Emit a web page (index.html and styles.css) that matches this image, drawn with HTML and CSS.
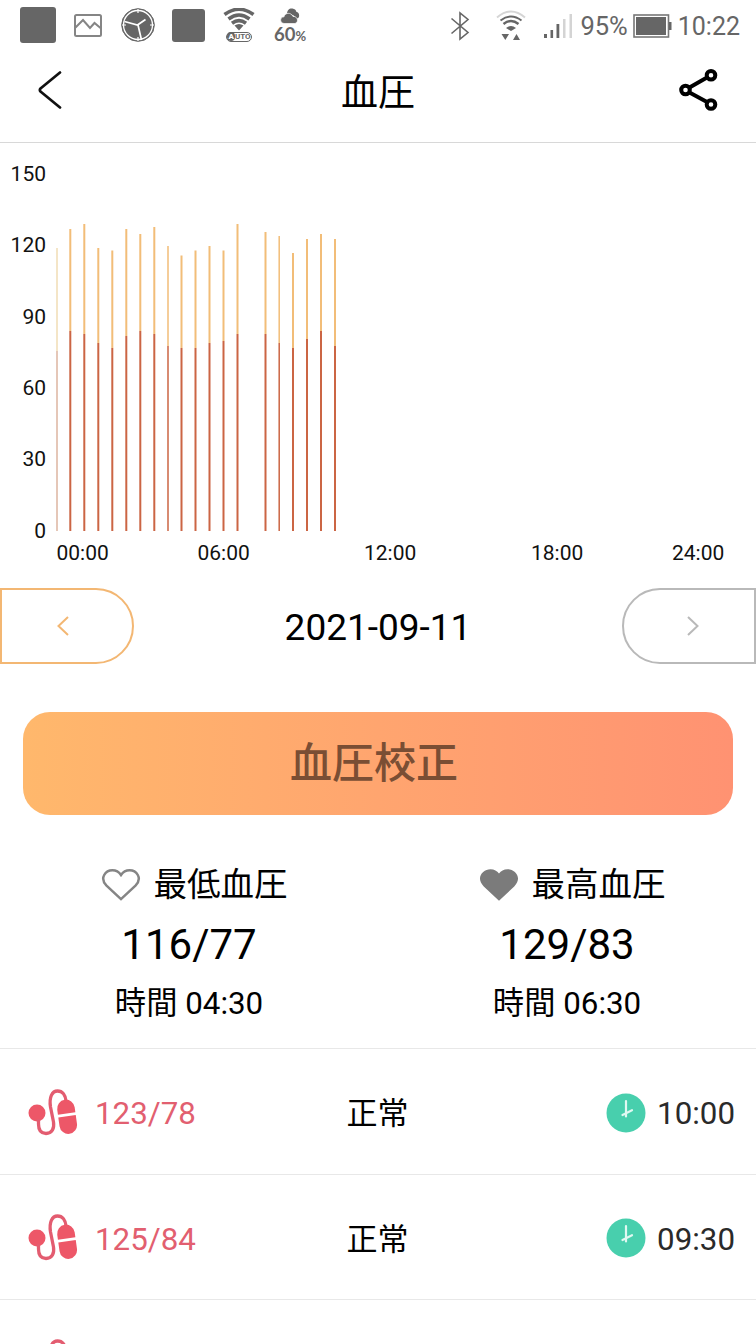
FILE: index.html
```html
<!DOCTYPE html>
<html lang="ja">
<head>
  <meta charset="UTF-8">
  <meta name="viewport" content="width=device-width, initial-scale=1.0">
  <title>血圧</title>
  <link rel="stylesheet" href="styles.css">
</head>
<body>
  <svg class="symbols" width="0" height="0">
    <symbol id="icon-meter" viewBox="0 0 50 50">
      <circle cx="9" cy="25" r="8.500" fill="#ed5768"/>
      <path d="M10.500 31v5c0 6 2.500 9.500 7.500 9.500 6 0 8.500-5 7.500-11.500l-3-15C21 9.500 24 3 29.500 3c5 0 8 4 8.500 10" fill="none" stroke="#e35c70" stroke-width="3.300"/>
      <g transform="rotate(-8 39 28)" fill="#ed5768">
        <path d="M30.200 25.500v-5a8.800 9 0 0 1 17.600 0v5z"/>
        <path d="M30.200 28.200h17.600V37a8.800 9 0 0 1-17.600 0z"/>
      </g>
    </symbol>
    <symbol id="icon-clock" viewBox="0 0 40 40">
      <circle cx="20" cy="20" r="19.500" fill="#48cfad"/>
      <path d="M20 8v15.500M16.500 22l9.500-4.800" fill="none" stroke="#e0f8f1" stroke-width="2.200" stroke-linecap="round"/>
    </symbol>
  </svg>

  <div class="status-bar">
    <div class="status-left">
      <span class="block block-large"></span>
      <svg class="icon-picture" width="28" height="23" viewBox="0 0 28 23" fill="none" stroke="#858585" stroke-width="2">
        <rect x="1" y="1" width="26" height="21" rx="1.500"/>
        <path d="M1.500 13.500L9 6l7 8 4.500-5 6 5"/>
      </svg>
      <svg class="icon-watch" width="36" height="36" viewBox="0 0 36 36">
        <circle cx="18" cy="18" r="16.300" fill="#666" stroke="#666"/>
        <circle cx="18" cy="18" r="14.500" fill="none" stroke="#fff" stroke-width="1.300"/>
        <path d="M18 2v4M18 30v4M2 18h4M30 18h4" stroke="#fff" stroke-width="1.200"/>
        <path d="M4.500 14.500l13 3.500 8-5.500M18 18l3.500 15" fill="none" stroke="#fff" stroke-width="1.700"/>
      </svg>
      <span class="block block-small"></span>
      <div class="wifi-auto">
        <svg width="32" height="23" viewBox="0 0 32 23" fill="none" stroke="#666" stroke-width="3.600">
          <path d="M1.500 6.500Q16-4 30.500 6.500"/>
          <path d="M5.500 11Q16 3 26.500 11"/>
          <path d="M9 15.300Q16 10 23 15.300"/>
          <path d="M11.500 17.500Q16 14.500 20.500 17.500L16 22.500z" fill="#666" stroke="none"/>
        </svg>
        <span class="auto-label"><b>A</b>UTO</span>
      </div>
      <div class="weather">
        <svg width="20" height="16" viewBox="0 0 20 16">
          <path d="M7 6C7 2 9.500 0 12.500.500c2 .3 3.500 1.500 3.800 3.200C20 4.500 20 10 17 10.500L13 7z" fill="#666"/>
          <path d="M4 15.500C-.5 15-.5 9 4 8.800 5 4.500 11 4 13 8.500c5-.5 6 6 2 7z" fill="#666" stroke="#fff" stroke-width=".7"/>
        </svg>
        <span class="humidity">60<small>%</small></span>
      </div>
    </div>
    <div class="status-right">
      <svg class="icon-bluetooth" width="20" height="30" viewBox="0 0 20 30" fill="none" stroke="#666" stroke-width="1.600">
        <path d="M1.500 7.500L18 21.500l-8 6.500V2l8 6.500L1.500 22.500"/>
      </svg>
      <svg class="icon-wifi" width="30" height="32" viewBox="0 0 30 32" fill="none" stroke="#666" stroke-width="2">
        <path d="M1 7.500Q15-4.500 29 7.500" stroke="#d5d5d5"/>
        <path d="M4.500 10.500Q15 2.500 25.500 10.500"/>
        <path d="M7.500 14Q15 8 22.500 14" stroke-width="2.400"/>
        <path d="M10 18Q15 14 20 18l-5 3z" fill="#666" stroke="none"/>
        <path d="M5.500 24h7.500l-3.700 6zM17 30h7l-3.500-6z" fill="#666" stroke="none"/>
      </svg>
      <svg class="icon-signal" width="30" height="26" viewBox="0 0 30 26">
        <path d="M1 21h3v4H1zM7.500 17h2.600v8H7.500zM13.500 11h2.800v14h-2.800z" fill="#666"/>
        <path d="M20 6h2.500v19H20zM26.500 1H29v24h-2.500z" fill="#d4d4d4"/>
      </svg>
      <span class="battery-level">95%</span>
      <svg class="icon-battery" width="39" height="24" viewBox="0 0 39 24">
        <rect x="1" y="1" width="34.500" height="22" fill="none" stroke="#777" stroke-width="1.600"/>
        <rect x="3" y="3" width="30" height="18" fill="#666"/>
        <rect x="36" y="8" width="2.500" height="8" fill="#666"/>
      </svg>
      <span class="time">10:22</span>
    </div>
  </div>

  <header class="header">
    <svg class="icon-back" width="24" height="38" viewBox="0 0 24 38" fill="none" stroke="#111" stroke-width="2.700" stroke-linecap="round" stroke-linejoin="round">
      <path d="M22 1.500L2.500 17.500Q1.200 19 2.500 20.500L22 36.500"/>
    </svg>
    <h1>血圧</h1>
    <svg class="icon-share" width="40" height="42" viewBox="0 0 40 42" fill="none" stroke="#000" stroke-width="4">
      <circle cx="6.500" cy="21" r="4.300"/>
      <circle cx="32" cy="6.300" r="4.300"/>
      <circle cx="32" cy="35.500" r="4.300"/>
      <path d="M10.500 18.500L28 8.500M10.500 23.500L28 33"/>
    </svg>
  </header>

  <section class="chart">
    <svg width="756" height="445" viewBox="0 143 756 445">
      <g class="axis axis-y">
        <text x="46" y="181">150</text>
        <text x="46" y="252">120</text>
        <text x="46" y="323.500">90</text>
        <text x="46" y="395">60</text>
        <text x="46" y="466">30</text>
        <text x="46" y="537.500">0</text>
      </g>
      <g class="axis">
        <text x="56.500" y="559.500">00:00</text>
        <text x="197.500" y="559.500">06:00</text>
        <text x="364" y="559.500">12:00</text>
        <text x="531" y="559.500">18:00</text>
        <text x="672" y="559.500">24:00</text>
      </g>
      <path class="high faint" d="M57 248V351"/>
      <path class="high" d="M70.300 229V331M84.300 224V334M98.300 248V343M112.300 250.500V348M126.300 229V336M140.300 234V331M154.300 227V334M181.500 255.500V348M195.500 250.500V348M209.500 246V343M223.500 250.500V341M237.500 224V334M265.500 232V334M293 253V348M307 239V339M321 234V331M335 239V346"/>
      <path class="high thin" d="M168 246V346M279.200 236V343"/>
      <path class="low faint" d="M57 351V531"/>
      <path class="low" d="M70.300 331V531M84.300 334V531M98.300 343V531M112.300 348V531M126.300 336V531M140.300 331V531M154.300 334V531M181.500 348V531M195.500 348V531M209.500 343V531M223.500 341V531M237.500 334V531M265.500 334V531M293 348V531M307 339V531M321 331V531M335 346V531"/>
      <path class="low thin" d="M168 346V531M279.200 343V531"/>
    </svg>
  </section>

  <nav class="date-nav">
    <button class="prev-btn">
      <svg width="12" height="20" viewBox="0 0 12 20" fill="none" stroke="currentColor" stroke-width="2"><path d="M11 1L1.500 10l9.500 9"/></svg>
    </button>
    <span class="date">2021-09-11</span>
    <button class="next-btn">
      <svg width="12" height="20" viewBox="0 0 12 20" fill="none" stroke="currentColor" stroke-width="2"><path d="M1 1l9.500 9L1 19"/></svg>
    </button>
  </nav>

  <button class="adjust-btn">血圧校正</button>

  <section class="summary">
    <div class="summary-item">
      <div class="summary-title">
        <svg width="40" height="34" viewBox="-1 0 42 34"><path d="M20 31.800L4.800 17.600C-3 9.500 4 1.500 11 1.500c4 0 7 2 9 5 2-3 5-5 9-5 7 0 14 8 6.200 16.100z" fill="none" stroke="#858585" stroke-width="2.600"/></svg>
        <span>最低血圧</span>
      </div>
      <div class="summary-value">116/77</div>
      <div class="summary-time">時間 04:30</div>
    </div>
    <div class="summary-item">
      <div class="summary-title">
        <svg width="40" height="34" viewBox="-1 0 42 34"><path d="M20 33.500L4 18.500C-5 9.500 3 .500 11 .500c4 0 7 2 9 4.500 2-2.500 5-4.500 9-4.500 8 0 16 9 7 18z" fill="#7b7b7b"/></svg>
        <span>最高血圧</span>
      </div>
      <div class="summary-value">129/83</div>
      <div class="summary-time">時間 06:30</div>
    </div>
  </section>

  <div class="records">
    <div class="record">
      <div class="record-value">
        <svg width="50" height="50"><use href="#icon-meter"/></svg>
        <span>123/78</span>
      </div>
      <div class="record-state">正常</div>
      <div class="record-time">
        <svg width="40" height="40"><use href="#icon-clock"/></svg>
        <span>10:00</span>
      </div>
    </div>
    <div class="record">
      <div class="record-value">
        <svg width="50" height="50"><use href="#icon-meter"/></svg>
        <span>125/84</span>
      </div>
      <div class="record-state">正常</div>
      <div class="record-time">
        <svg width="40" height="40"><use href="#icon-clock"/></svg>
        <span>09:30</span>
      </div>
    </div>
    <div class="record">
      <div class="record-value">
        <svg width="50" height="50"><use href="#icon-meter"/></svg>
      </div>
    </div>
  </div>
</body>
</html>
```

FILE: styles.css
```css
* {
  margin: 0;
  padding: 0;
  box-sizing: border-box;
}

body {
  width: 756px;
  height: 1344px;
  overflow: hidden;
  background: #fff;
  color: #000;
  font-family: Roboto, "Noto Sans CJK JP", sans-serif;
}

svg {
  display: block;
  flex-shrink: 0;
}

.symbols {
  position: absolute;
}

button {
  font-family: inherit;
  background: none;
  cursor: pointer;
}

/* status bar */
.status-bar {
  height: 50px;
  display: flex;
  justify-content: space-between;
  padding: 0 16px 0 20px;
  color: #666;
}

.status-left,
.status-right {
  display: flex;
  align-items: center;
}

.status-right {
  padding-top: 2px;
}

.block {
  background: #666;
  border-radius: 3px;
}

.block-large {
  width: 36px;
  height: 36px;
}

.block-small {
  width: 33px;
  height: 33px;
  margin-left: 16px;
}

.icon-picture {
  margin-left: 18px;
}

.icon-watch {
  margin-left: 18px;
}

.wifi-auto {
  display: flex;
  flex-direction: column;
  align-items: center;
  width: 32px;
  margin-left: 18px;
}

.auto-label {
  width: 26px;
  height: 10px;
  margin-top: 1px;
  border: 1px solid #666;
  border-radius: 5px;
  font-size: 8px;
  line-height: 8px;
  font-weight: 700;
  text-align: center;
}

.auto-label b {
  padding: 0 1px;
  border-radius: 4px;
  background: #666;
  color: #fff;
}

.weather {
  display: flex;
  flex-direction: column;
  align-items: center;
  width: 32px;
  margin-left: 19px;
  padding-top: 3px;
}

.humidity {
  margin-top: 1px;
  font-family: Lato, sans-serif;
  font-size: 18.500px;
  line-height: 18px;
  font-weight: 700;
}

.humidity small {
  font-size: 13px;
}

.icon-wifi {
  margin-left: 26px;
}

.icon-signal {
  margin-left: 17px;
}

.battery-level {
  margin-left: 7px;
  font-size: 25.500px;
}

.icon-battery {
  margin-left: 5px;
}

.time {
  margin-left: 6px;
  font-size: 25px;
}

/* header */
.header {
  height: 93px;
  display: flex;
  align-items: center;
  justify-content: space-between;
  padding: 0 37px 13px 38px;
  border-bottom: 1px solid #d8d8d8;
}

.header h1 {
  padding-left: 15px;
  font-size: 37px;
  font-weight: 400;
}

/* chart */
.chart {
  height: 445px;
}

.axis {
  font-size: 21px;
  fill: #111;
}

.axis-y {
  text-anchor: end;
}

.high,
.low {
  fill: none;
  stroke-width: 2;
}

.high {
  stroke: #f2bd78;
}

.low {
  stroke: #cb6544;
}

.thin {
  stroke-width: 1.500;
}

.faint {
  stroke-width: 1.500;
}

.high.faint {
  stroke: #f0dcb4;
}

.low.faint {
  stroke: #dcb5a0;
}

/* date switch */
.date-nav {
  height: 76px;
  display: flex;
  align-items: center;
  justify-content: space-between;
}

.prev-btn,
.next-btn {
  width: 134px;
  height: 76px;
  display: flex;
  align-items: center;
  border: 2px solid;
}

.prev-btn {
  padding-left: 55px;
  color: #f3b773;
  border-radius: 0 38px 38px 0;
}

.next-btn {
  padding-left: 63px;
  color: #b9b9b9;
  border-radius: 38px 0 0 38px;
}

.date {
  padding-top: 2px;
  font-size: 37px;
}

.adjust-btn {
  display: block;
  width: 710px;
  height: 103px;
  margin: 48px auto 0;
  padding: 0 8px 9px 0;
  border: none;
  border-radius: 27px;
  background: linear-gradient(90deg, #ffb86c, #ff9272);
  color: #7a4e34;
  font-size: 42px;
  font-weight: 500;
}

/* min and max */
.summary {
  height: 233px;
  display: flex;
  padding-top: 44px;
}

.summary-item {
  flex: 1;
  display: flex;
  flex-direction: column;
  align-items: center;
}

.summary-title {
  height: 50px;
  display: flex;
  align-items: center;
  gap: 13px;
  padding-left: 10px;
  font-size: 33.500px;
}

.summary-title svg {
  margin-top: 2px;
}

.summary-title span {
  padding-bottom: 5px;
}

.summary-value {
  height: 72px;
  font-size: 42px;
  line-height: 72px;
}

.summary-time {
  height: 46px;
  font-size: 31.300px;
  line-height: 46px;
}

/* history */
.records {
  height: 296px;
  overflow: hidden;
}

.record {
  height: 125.500px;
  display: grid;
  grid-template-columns: 1fr 62px 1fr;
  align-items: center;
  padding: 3px 21px 0 28px;
  border-top: 1px solid #e8e8e8;
  font-size: 31.300px;
}

.record:nth-child(2) {
  height: 125px;
}

.record-value,
.record-time {
  display: flex;
  align-items: center;
}

.record-value {
  gap: 17px;
  color: #e25f70;
}

.record-value span,
.record-time span {
  padding-top: 2px;
}

.record-state {
  padding-bottom: 4px;
  margin-left: -4px;
  font-size: 31px;
}

.record-time {
  gap: 11px;
  justify-content: flex-end;
  color: #2a2a2a;
}
```
